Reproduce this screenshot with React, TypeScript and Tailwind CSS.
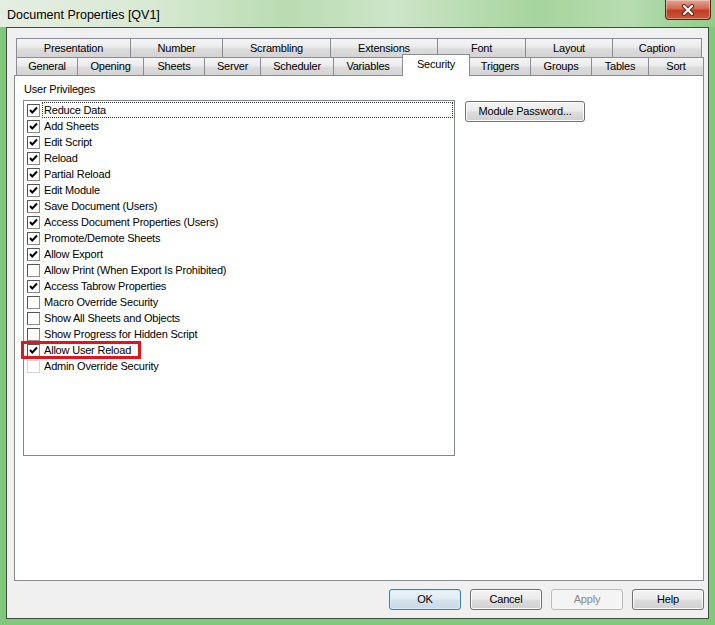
import React from "react";

const row1 = [
  ["Presentation", "w-[115px]"],
  ["Number", "w-[93px]"],
  ["Scrambling", "w-[109px]"],
  ["Extensions", "w-[108px]"],
  ["Font", "w-[89px]"],
  ["Layout", "w-[88px]"],
  ["Caption", "w-[90px]"],
];

const row2 = [
  ["General", "w-[62px]"],
  ["Opening", "w-[67px]"],
  ["Sheets", "w-[62px]"],
  ["Server", "w-[57px]"],
  ["Scheduler", "w-[74px]"],
  ["Variables", "w-[70px]"],
  ["Security", "w-[68px]"],
  ["Triggers", "w-[62px]"],
  ["Groups", "w-[62px]"],
  ["Tables", "w-[58px]"],
  ["Sort", "w-[56px]"],
];

const items: [string, boolean, boolean?][] = [
  ["Reduce Data", true],
  ["Add Sheets", true],
  ["Edit Script", true],
  ["Reload", true],
  ["Partial Reload", true],
  ["Edit Module", true],
  ["Save Document (Users)", true],
  ["Access Document Properties (Users)", true],
  ["Promote/Demote Sheets", true],
  ["Allow Export", true],
  ["Allow Print (When Export Is Prohibited)", false],
  ["Access Tabrow Properties", true],
  ["Macro Override Security", false],
  ["Show All Sheets and Objects", false],
  ["Show Progress for Hidden Script", false],
  ["Allow User Reload", true],
  ["Admin Override Security", false, true],
];

function Check({ checked, disabled }: { checked: boolean; disabled?: boolean }) {
  return (
    <div
      className={
        "w-[13px] h-[13px] shrink-0 bg-white border " +
        (disabled
          ? "border-[#d4d4d4]"
          : "border-t-[#555] border-l-[#555] border-r-[#8c8c8c] border-b-[#8c8c8c]")
      }
    >
      {checked && (
        <svg width="11" height="11" viewBox="0 0 11 11" className="block">
          <path d="M2 5 L4.3 7.5 L9 2.5" fill="none" stroke="#000" strokeWidth="2" />
        </svg>
      )}
    </div>
  );
}

function Tab({ label, w, first }: { label: string; w: string; first?: boolean }) {
  return (
    <div
      className={
        w +
        " h-full flex items-center justify-center border-t border-l border-r border-[#898c95] bg-[linear-gradient(to_bottom,#f5f5f5,#ebebeb_45%,#dcdcdc_55%,#d3d3d3)] " +
        (first ? "" : "-ml-px")
      }
    >
      {label}
    </div>
  );
}

function Button({ label, variant }: { label: string; variant?: "default" | "disabled" }) {
  let cls =
    "border-[#707070] bg-[linear-gradient(to_bottom,#f3f3f3,#ebebeb_48%,#dddddd_52%,#d0d0d0)] shadow-[inset_0_0_0_1px_#fcfcfc] text-black";
  if (variant === "default")
    cls =
      "border-[#3c7fb1] bg-[linear-gradient(to_bottom,#eaf3f9,#e1ebf2_48%,#d4e2ec_52%,#cad9e6)] shadow-[inset_0_0_0_1px_#d6ecf8] text-black";
  if (variant === "disabled") cls = "border-[#b9bcbe] bg-[#f4f4f4] text-[#8a8a8a]";
  return (
    <div className={"w-[72px] h-[21px] rounded-[3px] border flex items-center justify-center " + cls}>
      {label}
    </div>
  );
}

export default function App() {
  return (
    <div className="w-[715px] h-[625px] overflow-hidden flex flex-col bg-[#80c97a] font-['Liberation_Sans',Arial,sans-serif] text-[11px] tracking-[-0.2px] text-black">
      {/* Title bar */}
      <div className="relative h-[27px] shrink-0 bg-[linear-gradient(to_right,#e4eee1_0%,#d9ead4_20%,#b9dcb2_40%,#cde5c8_55%,#a6d49d_75%,#b7dcb0_88%,#90cc89_100%)]">
        <span className="absolute left-[7px] top-[6px] text-[12.5px] tracking-normal">Document Properties [QV1]</span>
        <div className="absolute right-[4px] top-0 w-[46px] h-[20px] rounded-b-[4px] border border-t-0 border-[#5a2218] bg-[linear-gradient(to_bottom,#e6a393,#d06a52_45%,#bf3e24_55%,#c9573c)] shadow-[inset_0_0_0_1px_rgba(255,255,255,0.35)] flex items-center justify-center">
          <svg width="14" height="12" viewBox="0 0 14 12">
            <path d="M3 2 L11 10 M11 2 L3 10" stroke="#5a2218" strokeWidth="4" strokeLinecap="round" />
            <path d="M3 2 L11 10 M11 2 L3 10" stroke="#ffffff" strokeWidth="2.2" strokeLinecap="round" />
          </svg>
        </div>
      </div>

      {/* Client area */}
      <div className="h-[592px] mx-[6px] border border-[#3f4f3f] bg-[#f0f0f0] flex flex-col pl-[7px] pr-[3px] pt-[10px]">
        {/* Tab row 1 */}
        <div className="h-[19px] flex ml-[2px]">
          {row1.map(([l, w], i) => (
            <Tab key={l} label={l} w={w} first={i === 0} />
          ))}
        </div>
        {/* Tab row 2 */}
        <div className="h-[18px] flex ml-[2px] items-start">
          {row2.map(([l, w], i) =>
            l === "Security" ? (
              <div
                key={l}
                className={w + " relative z-10 -ml-px -mt-[3px] h-[22px] pb-[3px] flex items-center justify-center border-t border-l border-r border-[#898c95] bg-white"}
              >
                {l}
              </div>
            ) : (
              <Tab key={l} label={l} w={w} first={i === 0} />
            )
          )}
        </div>

        {/* Panel */}
        <div className="h-[506px] w-[690px] border border-[#898c95] bg-white pl-[8px] pt-[6px]">
          <div className="ml-px leading-[14px]">User Privileges</div>
          <div className="flex items-start mt-[4px]">
            <div className="relative w-[432px] h-[356px] border border-[#828790] bg-white pt-px pl-[3px]">
              {items.map(([label, checked, disabled], i) => (
                <div key={label} className="h-[16px] flex items-center">
                  <Check checked={checked} disabled={disabled} />
                  <div
                    className={
                      "ml-[2px] mr-px flex-1 h-[16px] flex items-center pl-px border " +
                      (i === 0 ? "border-dotted border-[#333]" : "border-transparent")
                    }
                  >
                    {label}
                  </div>
                </div>
              ))}
              <div className="absolute left-[-3px] top-[240px] w-[120px] h-[18px] border-[3px] border-[#e3141c]" />
            </div>
            <div className="ml-[10px] mt-px w-[120px] h-[21px] rounded-[3px] border border-[#707070] bg-[linear-gradient(to_bottom,#f3f3f3,#ebebeb_48%,#dddddd_52%,#d0d0d0)] shadow-[inset_0_0_0_1px_#fcfcfc] flex items-center justify-center">
              Module Password...
            </div>
          </div>
        </div>

        {/* Buttons */}
        <div className="mt-[8px] mr-px flex justify-end gap-[9px]">
          <Button label="OK" variant="default" />
          <Button label="Cancel" />
          <Button label="Apply" variant="disabled" />
          <Button label="Help" />
        </div>
      </div>
    </div>
  );
}
